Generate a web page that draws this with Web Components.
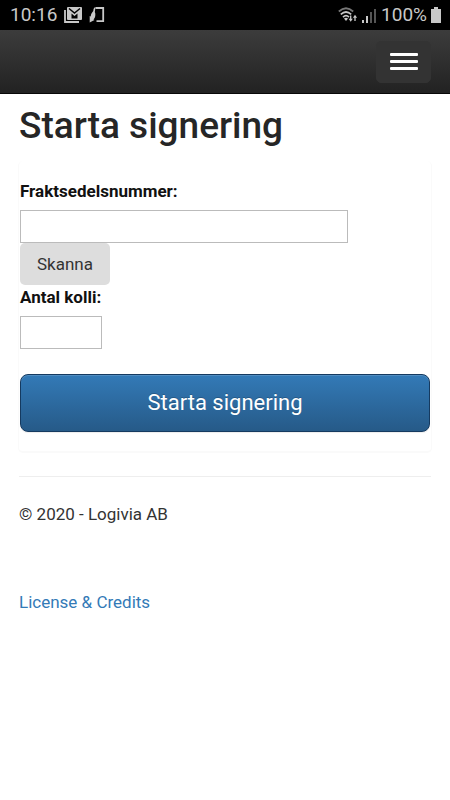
<!DOCTYPE html>
<html lang="sv">
<head>
<meta charset="utf-8">
<meta name="viewport" content="width=device-width, initial-scale=1">
<title>Starta signering</title>
<style>
  html { background: #fff; }
  body { margin: 0; font-family: Roboto, "Liberation Sans", sans-serif; font-size: 17px; line-height: 24px; color: #333; }
</style>
</head>
<body>
<app-page></app-page>

<template id="status-bar">
  <style>
    :host { display: flex; align-items: center; justify-content: space-between; height: 30px; box-sizing: border-box; padding: 0 9px 0 10px; background: #000; color: #c8c8c8; font-size: 19px; line-height: 30px; }
    div { display: flex; align-items: center; gap: 7px; }
    .right { gap: 4px; }
    svg { display: block; }
  </style>
  <div>
    <span>10:16</span>
    <svg width="18" height="16" viewBox="0 0 18 16" fill="none" aria-hidden="true">
      <path d="M1 3V15H15" stroke="#c8c8c8" stroke-width="1.800"/>
      <rect x="3" width="15" height="13" rx="1" fill="#c8c8c8"/>
      <path d="M5 1.500L10.500 6 16 1.500" stroke="#000" stroke-width="1.400"/>
      <path d="M7.500 11.500V6.500L10.500 9 13.500 6.500V11.500Z" fill="#000"/>
    </svg>
    <svg width="16" height="16" viewBox="0 0 16 16" fill="none" stroke="#c8c8c8" aria-hidden="true">
      <path d="M6.500 1H14.200V14.200H7.500" stroke-width="1.800"/>
      <path d="M6.500.2C4.800.2 4.500 2 4.300 4 2.500 6 1.800 7.500 1.800 9.500L.7 9V15.500L5.500 13 4.500 12.500C6 11 6.500 9 6.300 6.500L5.800 5Z" fill="#c8c8c8" stroke="none"/>
    </svg>
  </div>
  <div class="right">
    <svg width="20" height="16" viewBox="0 0 20 16" fill="none" stroke="#c8c8c8" stroke-width="1.700" aria-hidden="true">
      <path d="M.8 4.500Q8-2 15.200 4.500" stroke="#777"/>
      <path d="M2.800 7.400Q8 2.600 13.200 7.400M5 10.200Q8 7.200 11 10.200"/>
      <path d="M6 11.600Q8 9.800 10 11.600L8 14Z" fill="#c8c8c8" stroke="none"/>
      <path d="M12.700 8.500V13M17 14V9" stroke-width="1.300"/>
      <path d="M10.600 11.700h4.200l-2.100 3ZM14.900 10.700h4.200L17 7.700Z" fill="#c8c8c8" stroke="none"/>
    </svg>
    <svg width="15" height="15" viewBox="0 0 15 15" aria-hidden="true">
      <path fill="#c8c8c8" d="M0 12h2v3H0zM4 8h2v7H4z"/>
      <path fill="#555" d="M8 4h2v11H8zM12 1h2v14h-2z"/>
    </svg>
    <span>100%</span>
    <svg width="10" height="16" viewBox="0 0 10 16" aria-hidden="true"><path fill="#c8c8c8" d="M3 0h4v2h3v14H0V2h3z"/></svg>
  </div>
</template>

<template id="nav-bar">
  <style>
    :host { display: flex; align-items: center; justify-content: flex-end; height: 64px; box-sizing: border-box; padding: 0 19px; background: linear-gradient(#3c3c3c, #222); border-bottom: 1px solid #080808; }
    button { display: flex; flex-direction: column; align-items: center; justify-content: center; gap: 4px; width: 55px; height: 42px; padding: 0; border: 1px solid #333; border-radius: 5px; background: #333; }
    i { display: block; width: 28px; height: 3px; border-radius: 1px; background: #fff; }
  </style>
  <button type="button" aria-label="Meny"><i></i><i></i><i></i></button>
</template>

<template id="text-field">
  <style>
    :host { display: block; }
    label { display: block; margin-bottom: 7px; font-weight: 700; color: #111; line-height: 24px; }
    input { display: block; width: var(--field-width, 100%); max-width: 100%; height: 33px; box-sizing: border-box; margin: 0; padding: 0 6px; border: 1px solid #bbb; border-radius: 0; background: #fff; font: inherit; color: inherit; outline: 0; }
  </style>
  <label for="field"><slot></slot></label>
  <input id="field" type="text">
</template>

<template id="action-button">
  <style>
    :host { display: block; }
    button { display: block; height: 42px; padding: 0 17px; border: 0; border-radius: 5px; background: #ddd; font: inherit; color: #333; }
    :host([primary]) button { width: 100%; height: 58px; border: 1px solid #153a60; border-radius: 8px; background: linear-gradient(#337ab7, #265a88); box-shadow: inset 0 1px 0 rgba(255,255,255,.15), 0 1px 1px rgba(0,0,0,.075); color: #fff; font-size: 22px; text-shadow: 0 -1px 0 rgba(0,0,0,.2); }
  </style>
  <button type="button"><slot></slot></button>
</template>

<template id="sign-form">
  <style>
    :host { display: block; }
    form { padding: 18px 1px 19px; border: 1px solid #fafafa; border-width: 0 1px 2px; border-radius: 5px; margin: 0 -1px; }
    .submit { margin-top: 25px; }
  </style>
  <form>
    <text-field style="--field-width: 80%">Fraktsedelsnummer:</text-field>
    <action-button>Skanna</action-button>
    <text-field style="--field-width: 20%">Antal kolli:</text-field>
    <action-button class="submit" primary>Starta signering</action-button>
  </form>
</template>

<template id="app-page">
  <style>
    :host { display: block; }
    main { padding: 0 19px; }
    h1 { margin: 10px 0 13px; font-size: 37px; line-height: 44px; font-weight: 500; color: #262626; }
    hr { height: 0; margin: 23px 0 25px; border: 0; border-top: 1px solid #eee; }
    p { margin: 0 0 64px; }
    a { color: #337ab7; text-decoration: none; }
  </style>
  <status-bar></status-bar>
  <nav-bar></nav-bar>
  <main>
    <h1>Starta signering</h1>
    <sign-form></sign-form>
    <hr>
    <footer>
      <p>© 2020 - Logivia AB</p>
      <a href="#license">License &amp; Credits</a>
    </footer>
  </main>
</template>

<script>
  class TemplateElement extends HTMLElement {
    constructor() {
      super();
      const template = document.getElementById(this.localName);
      this.attachShadow({ mode: "open" }).append(template.content.cloneNode(true));
    }
  }
  for (const name of ["status-bar", "nav-bar", "text-field", "action-button", "sign-form", "app-page"]) {
    customElements.define(name, class extends TemplateElement {});
  }
</script>
</body>
</html>
